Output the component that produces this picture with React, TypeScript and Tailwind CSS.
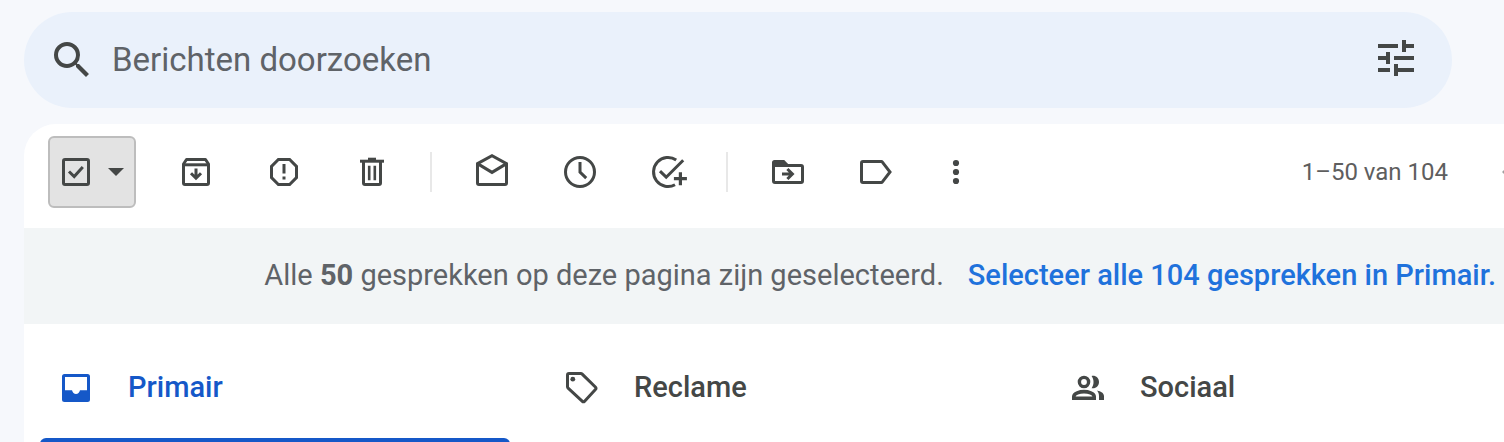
import { useState, type ReactNode } from 'react'

interface IconProps {
  children: ReactNode
}

// All toolbar and tab icons share a 40px grid and a 3px stroke
function Icon({ children }: IconProps) {
  return (
    <svg
      viewBox="0 0 40 40"
      className="size-10 shrink-0"
      fill="none"
      stroke="currentColor"
      strokeWidth="3"
      aria-hidden="true"
    >
      {children}
    </svg>
  )
}

const icons = {
  archive: (
    <Icon>
      <path d="M7.5 12V31a1.5 1.5 0 0 0 1.5 1.5h22a1.5 1.5 0 0 0 1.5-1.5V12L29.500 7.5h-19z" strokeLinejoin="round" />
      <path d="M7.5 12.800h25" />
      <path d="M20 16.5v9M15 21.2l5 5 5-5" />
    </Icon>
  ),
  spam: (
    <Icon>
      <path d="M14.4 7.5h11.2l6.9 6.9v11.2l-6.9 6.9H14.4l-6.9-6.9V14.4z" />
      <path d="M20 12v9.5M20 24.6v3" />
    </Icon>
  ),
  trash: (
    <Icon>
      <path d="M8 9.2h24" />
      <path d="M16 7.2h8" />
      <path d="M11.5 9v22a1.5 1.5 0 0 0 1.5 1.5h14a1.5 1.5 0 0 0 1.5-1.5V9" />
      <path d="M17.2 13.8v14.4M22.8 13.8v14.4" strokeWidth="2.6" />
    </Icon>
  ),
  unread: (
    <Icon>
      <path d="M5.5 11.6 20 3.7l14.5 7.9V31a1.5 1.5 0 0 1-1.5 1.5H7A1.5 1.5 0 0 1 5.5 31z" />
      <path d="M5.5 11.6 20 20.4l14.5-8.8" />
    </Icon>
  ),
  snooze: (
    <Icon>
      <circle cx="20" cy="20" r="14.5" />
      <path d="M20 10v10.2l6.2 6" />
    </Icon>
  ),
  task: (
    <Icon>
      <path d="M28.2 8A14.5 14.5 0 1 0 27 32.7" />
      <path d="m12 19.2 6.2 6L35.2 8.2" />
      <path d="M32.4 20.2v13M25.9 26.7h13" strokeWidth="3.2" />
    </Icon>
  ),
  move: (
    <Icon>
      <path d="M5 14V10.6A1.6 1.6 0 0 1 6.6 9h9.200l4.400 4.600H5z" fill="currentColor" strokeWidth="2" />
      <path d="M5.5 13.5H33a1.5 1.5 0 0 1 1.5 1.5v14a1.5 1.5 0 0 1-1.5 1.5H7A1.5 1.5 0 0 1 5.5 29z" />
      <path d="M14 22h10M19.4 17l5 5-5 5" />
    </Icon>
  ),
  label: (
    <Icon>
      <path d="M7 9.5h18.4a1 1 0 0 1 .8.4L34 20l-7.8 10.1a1 1 0 0 1-.8.4H7A1.5 1.5 0 0 1 5.5 29V11A1.5 1.5 0 0 1 7 9.5z" />
    </Icon>
  ),
  more: (
    <Icon>
      <g fill="currentColor" stroke="none">
        <circle cx="20" cy="11" r="3.1" />
        <circle cx="20" cy="20" r="3.1" />
        <circle cx="20" cy="29" r="3.1" />
      </g>
    </Icon>
  ),
  inbox: (
    <Icon>
      <path
        d="M8.5 6h23A2.5 2.5 0 0 1 34 8.5v23a2.5 2.5 0 0 1-2.5 2.5h-23A2.5 2.5 0 0 1 6 31.5v-23A2.5 2.5 0 0 1 8.5 6zM9 9v13.3h7c.6 2.4 2 3.7 4 3.7s3.4-1.3 4-3.7h7V9z"
        fill="currentColor"
        fillRule="evenodd"
        stroke="none"
      />
    </Icon>
  ),
  tag: (
    <Icon>
      <path d="M7 5.5h11.8a2 2 0 0 1 1.4.6L33.6 19.3a1.4 1.4 0 0 1 0 2L22.4 33.4a1.4 1.4 0 0 1-2 0L6.1 20.2a2 2 0 0 1-.6-1.4V7A1.5 1.5 0 0 1 7 5.5z" />
      <circle cx="10.8" cy="11.2" r="2.4" fill="currentColor" stroke="none" />
    </Icon>
  ),
  people: (
    <Icon>
      <circle cx="16" cy="14" r="4.6" strokeWidth="3.4" />
      <path d="M5.8 30.200v-1.700c0-3.300 6.100-4.900 10.200-4.900s10.200 1.600 10.200 4.900v1.700z" strokeWidth="3.600" />
      <path
        d="M23.6 8c4.2-.8 7.4 2.2 7.4 6s-3.2 7-7.4 6.200c2.600-3.600 2.600-8.600 0-12.200zM29 22.600c4.200.9 7 2.700 7 5.600V32h-5v-3.800c0-2.300-.7-4-2-5.600z"
        fill="currentColor"
        stroke="none"
      />
    </Icon>
  ),
}

const actionGroups = [
  [
    { label: 'Archiveren', icon: icons.archive },
    { label: 'Spam melden', icon: icons.spam },
    { label: 'Verwijderen', icon: icons.trash },
  ],
  [
    { label: 'Markeren als gelezen', icon: icons.unread },
    { label: 'Snoozen', icon: icons.snooze },
    { label: 'Toevoegen aan taken', icon: icons.task },
  ],
  [
    { label: 'Verplaatsen naar', icon: icons.move },
    { label: 'Labels', icon: icons.label },
  ],
]

const tabs = [
  { name: 'Primair', icon: icons.inbox },
  { name: 'Reclame', icon: icons.tag },
  { name: 'Sociaal', icon: icons.people },
]

function SearchBar() {
  return (
    <form
      className="mr-[52px] ml-6 flex h-24 shrink-0 items-center gap-4 rounded-full bg-[#eaf1fb] pr-8 pl-6"
      onSubmit={(e) => e.preventDefault()}
    >
      <button type="submit" aria-label="Zoeken" className="shrink-0">
        <svg viewBox="0 0 24 24" className="size-12" fill="currentColor">
          <path d="M15.5 14h-.79l-.28-.27A6.47 6.47 0 0 0 16 9.5 6.5 6.5 0 1 0 9.5 16c1.61 0 3.09-.59 4.23-1.57l.27.28v.79l5 4.99L20.49 19l-4.990-5zm-6 0C7.01 14 5 11.99 5 9.5S7.01 5 9.5 5 14 7.01 14 9.5 11.99 14 9.5 14z" />
        </svg>
      </button>
      <input
        type="text"
        aria-label="Berichten doorzoeken"
        placeholder="Berichten doorzoeken"
        className="min-w-0 flex-1 bg-transparent text-[33px] placeholder:text-[#5f6368] focus:outline-none"
      />
      <button type="button" aria-label="Geavanceerde zoekopties" className="shrink-0">
        <svg viewBox="0 1 24 24" className="size-12" fill="currentColor">
          <path d="M3 17v2h6v-2H3zM3 5v2h10V5H3zm10 16v-2h8v-2h-8v-2h-2v6h2zM7 9v2H3v2h4v2h2V9H7zm14 4v-2H11v2h10zm-6-4h2V7h4V5h-4V3h-2v6z" />
        </svg>
      </button>
    </form>
  )
}

function SelectBox() {
  const [checked, setChecked] = useState(true)

  return (
    <div className="flex h-[72px] w-[88px] shrink-0 items-center rounded-md border-2 border-[#bdbdbd] bg-[#e3e3e3] pl-3">
      <label className="relative flex">
        <input
          type="checkbox"
          aria-label="Alles selecteren"
          checked={checked}
          onChange={(e) => setChecked(e.target.checked)}
          className="size-7 appearance-none rounded-[3px] border-3 border-current"
        />
        {checked && (
          <svg viewBox="0 0 28 28" className="pointer-events-none absolute inset-0 size-7" fill="none" stroke="currentColor" strokeWidth="3">
            <path d="m7 13.5 5.2 5L20.8 9" />
          </svg>
        )}
      </label>
      <button type="button" aria-label="Selecteren" className="flex h-full flex-1 items-center justify-center pl-2">
        <svg viewBox="0 0 16 8" className="h-2 w-4" fill="currentColor">
          <path d="M0 0h16L8 8z" />
        </svg>
      </button>
    </div>
  )
}

function Toolbar() {
  return (
    <div className="flex h-[104px] items-center pb-2 pl-6">
      <SelectBox />
      <div className="ml-4 flex items-center">
        {actionGroups.map((group, i) => (
          <div key={i} className="flex items-center">
            {i > 0 && <div className="mr-4 ml-3.5 h-10 w-0.5 bg-[#e8e8e8]" />}
            {group.map((action) => (
              <button key={action.label} type="button" aria-label={action.label} className="flex h-[72px] w-[88px] items-center justify-center">
                {action.icon}
              </button>
            ))}
          </div>
        ))}
        <button type="button" aria-label="Meer" className="flex size-[72px] items-center justify-center">
          {icons.more}
        </button>
      </div>
      <span className="ml-auto text-2xl whitespace-nowrap text-[#5e5e5e]">1–50 van 104</span>
      {/* Previous-page arrow runs off the right edge */}
      <button type="button" aria-label="Vorige" className="ml-[54px] w-0.5 shrink-0 overflow-hidden text-[#a0a0a0]">
        <svg viewBox="0 0 12 20" className="h-5 w-3" fill="none" stroke="currentColor" strokeWidth="3">
          <path d="m11 1-9 9 9 9" />
        </svg>
      </button>
    </div>
  )
}

export default function App() {
  const [activeTab, setActiveTab] = useState('Primair')

  return (
    <div className="flex h-screen flex-col overflow-hidden bg-[#f6f8fc] pt-3 font-['Roboto','Liberation_Sans',sans-serif] text-[#444746]">
      <SearchBar />

      <main className="mt-4 ml-6 flex-1 rounded-tl-[32px] bg-white">
        <Toolbar />

        {/* Selection banner */}
        <div className="flex h-24 items-center justify-end gap-6 bg-[#f2f5f6] pr-2 text-[29px] whitespace-nowrap">
          <p className="text-[#5f6368]">
            Alle <b>50</b> gesprekken op deze pagina zijn geselecteerd.
          </p>
          <a href="#alles" className="font-medium text-[#1f72dc]">
            Selecteer alle 104 gesprekken in Primair.
          </a>
        </div>

        {/* Inbox categories */}
        <div role="tablist" className="flex">
          {tabs.map((tab) => {
            const active = tab.name === activeTab
            return (
              <button
                key={tab.name}
                type="button"
                role="tab"
                aria-selected={active}
                onClick={() => setActiveTab(tab.name)}
                className={`w-[506px] shrink-0 pr-5 pl-4 text-[29px] font-medium ${active ? 'text-[#1558c8]' : ''}`}
              >
                <span className="flex h-[114px] items-center gap-8 pt-3.5 pl-4">
                  {tab.icon}
                  {tab.name}
                </span>
                <span className={`block h-1.5 rounded-t-md ${active ? 'bg-[#1558c8]' : ''}`} />
              </button>
            )
          })}
        </div>
      </main>
    </div>
  )
}
